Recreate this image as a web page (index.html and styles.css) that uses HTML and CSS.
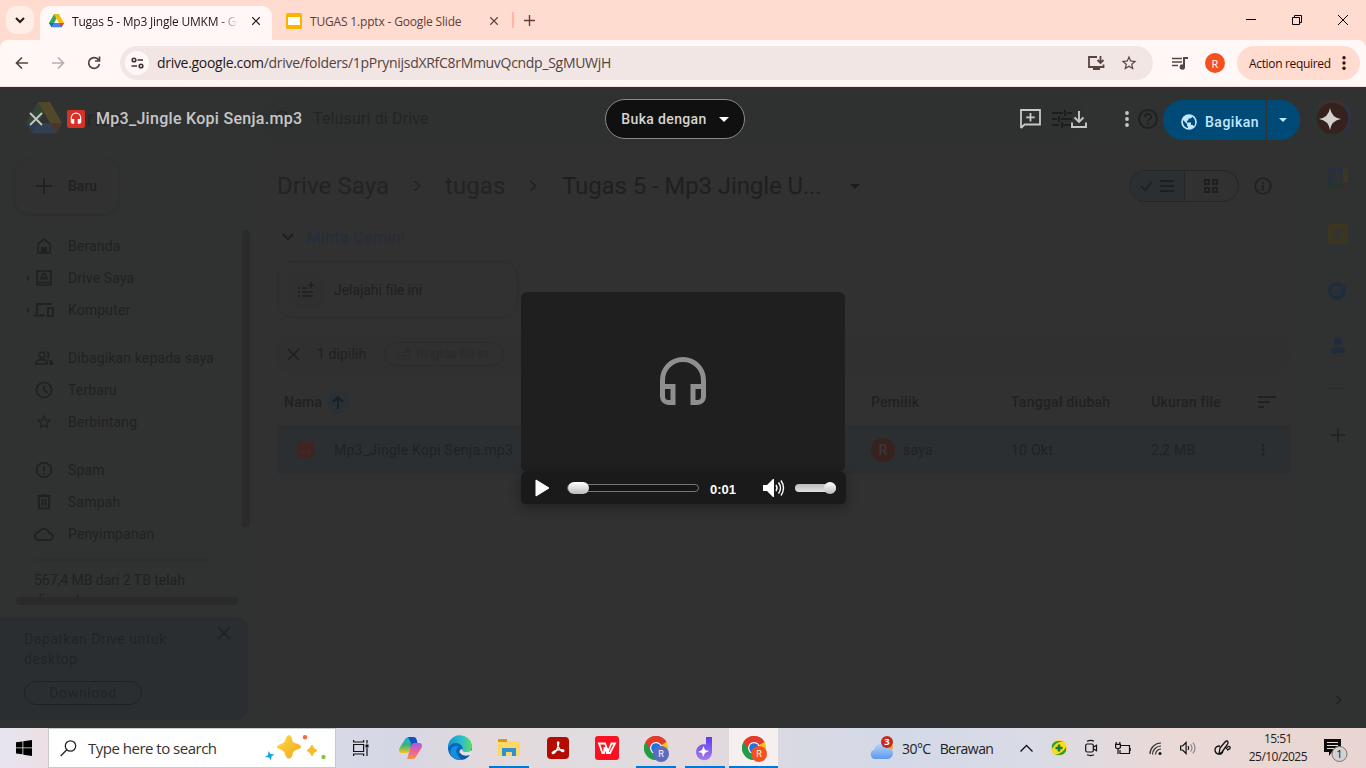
FILE: index.html
```html
<!DOCTYPE html>
<html lang="id">
<head>
<meta charset="utf-8">
<title>Tugas 5 - Mp3 Jingle UMKM - Google Drive</title>
<link rel="stylesheet" href="styles.css">
</head>
<body>
<svg class="defs" aria-hidden="true">
  <symbol id="drive" viewBox="0 0 24 22"><path d="M8 0h8l-4 7z" fill="#188038"/><path d="M8 0l4 7-7.5 14L0 14z" fill="#34a853"/><path d="M8 0h8l8 14h-8z" fill="#fbbc04"/><path d="M8 14h16l-4 7H4z" fill="#4285f4"/><path d="M16 14h8l-4 7z" fill="#ea4335"/><path d="M0 14h8l-4 7z" fill="#1967d2"/></symbol>
  <symbol id="headset" viewBox="0 0 24 24"><path d="M12 1a9 9 0 0 0-9 9v7a3 3 0 0 0 3 3h3v-8H5v-2a7 7 0 0 1 14 0v2h-4v8h3a3 3 0 0 0 3-3v-7a9 9 0 0 0-9-9z"/></symbol>
  <symbol id="x" viewBox="0 0 16 16"><path d="M2 2l12 12M14 2L2 14" fill="none" stroke="currentColor" stroke-width="1.8"/></symbol>
  <symbol id="plus" viewBox="0 0 16 16"><path d="M8 0v16M0 8h16" fill="none" stroke="currentColor" stroke-width="2"/></symbol>
  <symbol id="chev" viewBox="0 0 8 12"><path d="M1.5 1l5 5-5 5" fill="none" stroke="currentColor" stroke-width="1.7"/></symbol>
  <symbol id="star" viewBox="0 0 24 24"><path d="M22 9.24l-7.19-.62L12 2 9.19 8.63 2 9.24l5.46 4.73L5.82 21 12 17.27 18.18 21l-1.63-7.03L22 9.24zM12 15.4l-3.76 2.27 1-4.28-3.32-2.88 4.38-.38L12 6.1l1.71 4.04 4.38.38-3.32 2.88 1 4.28L12 15.4z"/></symbol>
  <symbol id="dots" viewBox="0 0 4 16"><circle cx="2" cy="2" r="1.9"/><circle cx="2" cy="8" r="1.9"/><circle cx="2" cy="14" r="1.9"/></symbol>
  <symbol id="chrome" viewBox="0 0 24 24"><circle cx="12" cy="12" r="12" fill="#fbc116"/><path d="M12 12L1.6 6A12 12 0 0 1 22.4 6z" fill="#e33b2e"/><path d="M1.6 6A12 12 0 0 0 12 24l5.2-9L12 12z" fill="#1e9e4a"/><path d="M12 6h10.4A12 12 0 0 0 1.6 6l5.2 9z" fill="#e33b2e"/><circle cx="12" cy="12" r="6" fill="#fff"/><circle cx="12" cy="12" r="4.8" fill="#1a73e8"/></symbol>
  <symbol id="listspark" viewBox="0 0 18 18"><path d="M1 7h2M5 7h5M1 11h2M5 11h11M1 15h2M5 15h11" stroke="currentColor" stroke-width="1.6" fill="none"/><path d="M14 0l1 3 3 1-3 1-1 3-1-3-3-1 3-1z" fill="currentColor"/></symbol>
</svg>

<div class="tabstrip">
  <button class="tabsearch"><svg width="10" height="7" viewBox="0 0 10 7"><path d="M1 1l4 4 4-4" fill="none" stroke="#2b1914" stroke-width="2"/></svg></button>
  <div class="tab active">
    <svg width="15" height="14"><use href="#drive"/></svg>
    <span class="tabtitle fade">Tugas 5 - Mp3 Jingle UMKM - Google Drive</span>
    <svg class="tabx" width="10" height="10"><use href="#x"/></svg>
  </div>
  <div class="tab second">
    <svg width="16" height="16" viewBox="0 0 16 16"><rect width="16" height="16" rx="1.5" fill="#fab400"/><rect x="2" y="4" width="12" height="8" fill="#fff"/></svg>
    <span class="tabtitle">TUGAS 1.pptx - Google Slide</span>
    <svg class="tabx" width="10" height="10"><use href="#x"/></svg>
  </div>
  <i class="tabsep"></i>
  <svg class="newtab" width="11" height="11"><use href="#plus"/></svg>
  <div class="winctl">
    <svg width="10" height="10" viewBox="0 0 10 10"><path d="M0 4.5h10" stroke="#000"/></svg>
    <svg width="10" height="10" viewBox="0 0 10 10" fill="none" stroke="#000"><path d="M.5 2.5h7v7h-7zM2.5 2V.5h7v7H8"/></svg>
    <svg width="10" height="10" viewBox="0 0 10 10"><path d="M0 0l10 10M10 0L0 10" stroke="#000"/></svg>
  </div>
</div>

<div class="toolbar">
  <svg class="nav-i" width="14" height="14" viewBox="0 0 14 14"><path d="M13 7H2M7 1.500L1.500 7 7 12.500"/></svg>
  <svg class="nav-i off" width="14" height="14" viewBox="0 0 14 14"><path d="M1 7h11M7 1.500L12.500 7 7 12.500"/></svg>
  <svg class="nav-i" width="14" height="14" viewBox="0 0 14 14"><path d="M11.600 4A5.400 5.400 0 1 0 12.400 8M12.500 .5v4.500H8"/></svg>
  <div class="omnibox">
    <span class="site"><svg width="13" height="12" viewBox="0 0 13 12" fill="none" stroke="#43302b" stroke-width="1.600"><circle cx="3" cy="3" r="1.800"/><path d="M6.500 3H12M0.500 9H6"/><circle cx="10" cy="9" r="1.800"/></svg></span>
    <span class="url"><b>drive.google.com</b>/drive/folders/1pPrynijsdXRfC8rMmuvQcndp_SgMUWjH</span>
    <svg class="inst" width="17" height="14" viewBox="0 0 17 14"><path d="M9 1H1v10h14.500V8.500" fill="none" stroke="#57443f" stroke-width="1.800"/><path d="M5 11h7v3H5z" fill="#57443f"/><path d="M12.500 0v6.500M9.500 4l3 3 3-3" fill="none" stroke="#57443f" stroke-width="1.800"/></svg>
    <svg width="18" height="18" fill="#57443f"><use href="#star"/></svg>
  </div>
  <svg class="media" width="16" height="13" viewBox="0 0 16 13"><path d="M0 1.500h10M0 5h10M0 8.500h6" stroke="#57443f" stroke-width="1.700"/><path d="M11 0h5v2h-3v8a2.700 2.700 0 1 1-2-2.600z" fill="#57443f"/></svg>
  <span class="me">R</span>
  <div class="action">Action required<svg width="4" height="14"><use href="#dots"/></svg></div>
</div>

<main class="stage">
  <section class="drive">
    <header class="dhead">
      <svg class="dlogo" width="36" height="33"><use href="#drive"/></svg>
      <span class="dname">Drive</span>
      <div class="dsearch"><svg width="18" height="18" viewBox="0 0 18 18"><circle cx="7" cy="7" r="5.500" fill="none" stroke="#252727" stroke-width="2"/><path d="M11 11l6 6" stroke="#252727" stroke-width="2"/></svg><span>Telusuri di Drive</span>
      <svg class="tune" width="20" height="18" viewBox="0 0 20 18"><path d="M0 3h11M15 3h5M13 0v6M0 9h5M9 9h11M7 6v6M0 15h7M11 15h9M10 12v6" stroke="#1c1e1e" stroke-width="2"/></svg></div>
      <svg class="help" width="20" height="20" viewBox="0 0 20 20"><circle cx="10" cy="10" r="9" fill="none" stroke="#1f2121" stroke-width="2"/><path d="M7 8a3 3 0 1 1 4.500 2.500Q10 11.300 10 12.500M10 14v2" fill="none" stroke="#1f2121" stroke-width="1.800"/></svg>
      <span class="avatar-ring"><i></i></span>
    </header>
    <aside class="side">
      <button class="new"><svg width="16" height="16"><use href="#plus"/></svg>Baru</button>
      <div class="scroller">
        <nav>
          <a><svg width="14" height="16" viewBox="0 0 14 16"><path d="M1 15V6l6-4.800L13 6v9z" fill="none" stroke="currentColor" stroke-width="1.700"/><path d="M4 15V9h6v6z"/></svg>Beranda</a>
          <a class="tri"><svg width="16" height="16" viewBox="0 0 16 16"><path d="M1 1h14v14H1zM1 12.500h14" fill="none" stroke="currentColor" stroke-width="1.600"/><path d="M7 4h2l2 4.500H5z" fill="none" stroke="currentColor" stroke-width="1.800"/></svg>Drive Saya</a>
          <a class="tri"><svg width="20" height="14" viewBox="0 0 20 14"><path d="M18 1H3v10M0 12.500h11M14 5h5v8h-5z" fill="none" stroke="currentColor" stroke-width="1.800"/></svg>Komputer</a>
          <a class="gap"><svg width="18" height="14" viewBox="0 0 18 14"><circle cx="7" cy="4" r="2.800" fill="none" stroke="currentColor" stroke-width="1.700"/><path d="M1 13v-1.500C1 9 5 8.700 7 8.700s5 .5 5 2.800V13z" fill="none" stroke="currentColor" stroke-width="1.700"/><path d="M11 .300a3.700 3.700 0 0 1 0 7.400 5 5 0 0 0 0-7.400M13 8.500c2.500.3 5 1.200 5 3V14h-3.500v-2.500c0-1.200-.6-2.200-1.500-3"/></svg>Dibagikan kepada saya</a>
          <a><svg width="18" height="18" viewBox="0 0 18 18" fill="none" stroke="currentColor" stroke-width="1.700"><circle cx="9" cy="9" r="7.500"/><path d="M9 4.500V9l3.500 3"/></svg>Terbaru</a>
          <a><svg width="18" height="18"><use href="#star"/></svg>Berbintang</a>
          <a class="gap"><svg width="16" height="16" viewBox="0 0 16 16" fill="none" stroke="currentColor" stroke-width="1.700"><path d="M5 1h6l4 4v6l-4 4H5l-4-4V5zM8 4v5M8 10.500v2"/></svg>Spam</a>
          <a><svg width="14" height="16" viewBox="0 0 14 16" fill="none" stroke="currentColor" stroke-width="1.800"><path d="M2 2v12.500h10V2M0 2h14M4.500 1h5M5.500 5v7M8.500 5v7"/></svg>Sampah</a>
          <a><svg width="20" height="14" viewBox="0 0 20 14" fill="none" stroke="currentColor" stroke-width="1.800"><path d="M5 13a4 4 0 0 1-.3-8A5.500 5.500 0 0 1 15 6a3.500 3.500 0 0 1 .5 7z"/></svg>Penyimpanan</a>
          <i class="quota"></i>
          <p>567,4 MB dari 2 TB telah digunakan</p>
        </nav>
        <i class="vbar"></i>
      </div>
      <i class="hbar"></i>
      <div class="promo">
        <div><p>Dapatkan Drive untuk desktop</p><svg width="16" height="16"><use href="#x"/></svg></div>
        <button>Download</button>
      </div>
    </aside>
    <section class="panel">
      <div class="crumbs">
        <span class="c1">Drive Saya</span><svg width="8" height="12"><use href="#chev"/></svg>
        <span class="c2">tugas</span><svg width="8" height="12"><use href="#chev"/></svg>
        <span class="c3">Tugas 5 - Mp3 Jingle U...</span><i class="caret"></i>
        <div class="views"><span><svg width="13" height="10" viewBox="0 0 13 10"><path d="M1 5l4 4 7-8" fill="none" stroke="currentColor" stroke-width="1.700"/></svg><svg width="14" height="12" viewBox="0 0 14 12"><path d="M0 1h14M0 6h14M0 11h14" stroke="currentColor" stroke-width="2"/></svg></span><span><svg width="14" height="14" viewBox="0 0 14 14" fill="none" stroke="currentColor" stroke-width="2"><path d="M1 1h4v4H1zM9 1h4v4H9zM1 9h4v4H1zM9 9h4v4H9z"/></svg></span></div>
        <svg class="info" width="18" height="18" viewBox="0 0 18 18" fill="none" stroke="#202020" stroke-width="1.600"><circle cx="9" cy="9" r="7.700"/><path d="M9 5v1.700M9 8v5.500"/></svg>
      </div>
      <div class="gemini"><svg width="12" height="8" viewBox="0 0 12 8"><path d="M1 1l5 5 5-5" fill="none" stroke="#1d1d1d" stroke-width="1.800"/></svg><span>Minta Gemini</span></div>
      <div class="explore"><span><svg width="18" height="18"><use href="#listspark"/></svg></span>Jelajahi file ini</div>
      <div class="selbar"><svg width="15" height="15"><use href="#x"/></svg><span>1 dipilih</span><div><svg width="14" height="14"><use href="#listspark"/></svg>Ringkas file ini</div></div>
      <div class="row head"><span class="nm">Nama<i><svg width="12" height="14" viewBox="0 0 12 14"><path d="M6 14V2M1 7l5-5 5 5" fill="none" stroke="#1c1f21" stroke-width="1.800"/></svg></i></span><span>Pemilik</span><span>Tanggal diubah</span><span>Ukuran file</span><svg width="18" height="12" viewBox="0 0 18 12"><path d="M0 1h18M0 6h12M0 11h6" stroke="#202020" stroke-width="2"/></svg></div>
      <div class="row file"><span class="nm"><b class="mp3 dim"><svg width="12" height="14"><use href="#headset"/></svg></b>Mp3_Jingle Kopi Senja.mp3</span><span><em>R</em>saya</span><span>10 Okt</span><span>2,2 MB</span><svg width="4" height="12"><use href="#dots"/></svg></div>
    </section>
    <aside class="rail">
      <svg width="20" height="20" viewBox="0 0 20 20"><path d="M0 0h15v5H5v10H0z" fill="#27303c"/><path d="M15 0h5v15h-5z" fill="#3a3628"/><path d="M0 15h20l-5 5H0z" fill="#27332b"/><path d="M15 15h5l-5 5z" fill="#3c2b2b"/><path d="M5 5h10v10H5z" fill="#303232"/><text x="10" y="13" text-anchor="middle" font-size="8" fill="#27303c">31</text></svg>
      <svg width="20" height="20" viewBox="0 0 20 20"><rect width="20" height="20" rx="2" fill="#3b3521"/><circle cx="10" cy="9" r="4" fill="#333331"/><path d="M8 14h4v2H8z" fill="#333331"/></svg>
      <svg width="20" height="20" viewBox="0 0 20 20"><circle cx="9" cy="11" r="7" fill="none" stroke="#1f2c3b" stroke-width="3.500"/><path d="M6 10l4 4 8-10" fill="none" stroke="#22303f" stroke-width="3"/></svg>
      <svg width="20" height="20" viewBox="0 0 20 20"><circle cx="10" cy="5.500" r="4" fill="#1f2c3b"/><path d="M3 17v-3c0-4 14-4 14 0v3z" fill="#1f2c3b"/></svg>
      <i></i>
      <svg class="rp" width="14" height="14"><use href="#plus"/></svg>
      <svg class="rc" width="7" height="10"><use href="#chev"/></svg>
    </aside>
  </section>

  <section class="viewer">
    <div class="vbarTop">
      <svg class="close" width="16" height="16"><use href="#x"/></svg>
      <b class="mp3"><svg width="14" height="16"><use href="#headset"/></svg></b>
      <h1>Mp3_Jingle Kopi Senja.mp3</h1>
      <button class="open">Buka dengan<i class="caret"></i></button>
      <svg class="comment" width="21" height="21" viewBox="0 0 21 21" fill="none" stroke="#c7c7c7" stroke-width="1.800"><path d="M1 19V1h19v14.500H4.500L1 19M10.500 4v8.500M6.200 8.300h8.600"/></svg>
      <svg class="down" width="16" height="17" viewBox="0 0 16 17" fill="none" stroke="#c7c7c7" stroke-width="1.900"><path d="M8 0v11M3.500 6.500L8 11l4.500-4.500M1 11.500V16h14v-4.500"/></svg>
      <svg class="more" width="4" height="16"><use href="#dots"/></svg>
      <div class="share"><span><svg width="16" height="16" viewBox="0 0 16 16"><circle cx="8" cy="8" r="7.800" fill="#c2e7ff"/><path d="M2 6l4 4v1.500L7 13v1C4 13.500 1.500 11 2 6zM11 2.500c0 1-1 2-2 2H7.500V6L6 7v1.500h4V11h2l1 1.500c2-3 1.500-8-2-10z" fill="#004a77"/></svg>Bagikan</span><span><i class="caret"></i></span></div>
      <svg class="spark" width="22" height="22" viewBox="0 0 22 22"><path d="M11 0Q12.500 9.500 22 11 12.500 12.500 11 22 9.500 12.500 0 11 9.500 9.500 11 0z" fill="#d2d0cf"/></svg>
    </div>
    <div class="player">
      <div class="art"><svg width="46" height="48" viewBox="0 0 46 48" fill="none" stroke="#8f8f8f" stroke-width="5"><path d="M2.500 30V23a20.500 20.500 0 0 1 41 0v7M2.500 29.500h10.500v16H8.500a6 6 0 0 1-6-6zM43.500 29.500H33v16h4.500a6 6 0 0 0 6-6z"/></svg></div>
      <div class="controls">
        <svg width="15" height="18" viewBox="0 0 15 18"><path d="M1 1l13 8-13 8z" fill="#fff" stroke="#fff" stroke-linejoin="round"/></svg>
        <div class="seek"><i></i></div>
        <time>0:01</time>
        <svg class="vol" width="22" height="18" viewBox="0 0 22 18"><path d="M0 6h4l6-6h1v18h-1l-6-6H0z" fill="#fff"/><path d="M13 6q2 3 0 6M15.500 3.500q4 5.500 0 11M18 1.500q5 7.500 0 15" fill="none" stroke="#fff" stroke-width="1.400"/></svg>
        <div class="level"><i></i></div>
      </div>
    </div>
  </section>
</main>

<footer class="taskbar">
  <span class="start"><svg width="16" height="16" viewBox="0 0 16 16"><path d="M0 2.300l6.500-.9v6H0zM7.300 1.300L16 0v7.400H7.300zM0 8.300h6.500v6L0 13.600zM7.300 8.300H16V16l-8.700-1.300z"/></svg></span>
  <div class="find">
    <svg width="17" height="17" viewBox="0 0 17 17" fill="none" stroke="#222" stroke-width="1.300"><circle cx="10.500" cy="6" r="5.200"/><path d="M6.800 9.800L.7 16"/></svg><span>Type here to search</span>
    <svg class="sparks" width="61" height="26" viewBox="0 0 61 26"><defs><linearGradient id="gold" x2="1" y2="1"><stop stop-color="#ffdb4d"/><stop offset="1" stop-color="#f0a612"/></linearGradient></defs><path d="M24 0Q26.500 0 27.500 6 28.500 8 33 9 36 10.500 36 12t-4 2.500q-3 1-4 3-1 6-4 6t-4.500-6q-1-2-4-3-3.500-1-3.500-2.500T16 9q3-1 4-3 1.500-6 4-6z" fill="url(#gold)"/><path d="M47 10q1 4 5 5.500-4 1.500-5 5.500-1.500-4-5-5.500 3.500-1.500 5-5.500z" fill="#f5bd28" stroke="#f5bd28"/><path d="M3.500 16l2 3 4 .5-3 2-.5 4-2-3-4-.5 3-2z" fill="#16a5e8"/><circle cx="40" cy="2.300" r="2.200" fill="#f26b3a"/><circle cx="58.500" cy="22" r="2.200" fill="#86ca3c"/></svg>
  </div>
  <span class="tview"><svg width="16" height="16" viewBox="0 0 16 16" fill="none" stroke="#111" stroke-width="1.200"><path d="M.6 4.500h10v7H.6zM.6 0v2h10V0M.6 16v-2h10v2M14 0v3.500M14 8v8"/><path d="M12.500 4.500h3v3h-3z" fill="#111" stroke="none"/></svg></span>
  <div class="apps">
    <span><svg width="23" height="22" viewBox="0 0 23 22"><defs><linearGradient id="cpa" x2="0" y2="1"><stop stop-color="#18b5ee"/><stop offset=".5" stop-color="#36b37e"/><stop offset="1" stop-color="#f5c51b"/></linearGradient><linearGradient id="cpb" x2="0" y2="1"><stop stop-color="#a45ae8"/><stop offset=".55" stop-color="#f06391"/><stop offset="1" stop-color="#f7944a"/></linearGradient></defs><path d="M6.500 1.500Q7.500 0 9.500 0H15l-4 13q-1 3-4 3H3q-4 0-2.500-5z" fill="url(#cpa)"/><path d="M16.500 20.500q-1 1.500-3 1.500H8l4-13q1-3 4-3h4q4 0 2.500 5z" fill="url(#cpb)"/><path d="M9 0h5.500Q17 0 17.800 3l.7 3H16q-3 0-4 3l-.5 1.500L12 6z" fill="#1451c4"/></svg></span>
    <span><svg width="24" height="24" viewBox="0 0 24 24"><defs><linearGradient id="edg" x2="1"><stop stop-color="#1794d8"/><stop offset=".6" stop-color="#2dc0c8"/><stop offset="1" stop-color="#62df54"/></linearGradient></defs><circle cx="12" cy="12" r="12" fill="#0b64b8"/><path d="M0 12A12 12 0 0 1 24 10.500q0 5.500-6 5.500-4 0-3.500-2.500 1-1.500-1-4Q9 5.500 4 8 1 9.500 0 12z" fill="url(#edg)"/><path d="M11 10q-5 4-1 10 2 3 6 3-10 3-14-6Q3 8 11 10z" fill="#1590dc"/><path d="M14.500 13q-1 3 4 3 3 0 5-2l1 4-2.500 2q-9 2-10.500-4 0-3 3-3z" fill="#e0dfe4"/><path d="M12 17q3 4 10 2-4 5-9 4-3-2-1-6z" fill="#0c58a6"/></svg></span>
    <span class="on"><svg width="22" height="20" viewBox="0 0 22 20"><path d="M0 1h8l2 2h11q1 0 1 1v14H0z" fill="#fed766"/><path d="M0 1h9v3H0z" fill="#dd9a0d"/><path d="M4 18v-8h14v8h-4v-4H8v4z" fill="#2e91d2"/></svg></span>
    <span><svg width="22" height="22" viewBox="0 0 22 22"><rect width="22" height="22" rx="4" fill="#b30b00"/><path d="M5.500 16.500c-1.500-1 4-4 7.500-4s4.500 1 3.500 1.800c-1.500 1-6-3-6-8 0-2 1.500-1.500 1.300 0-.3 3.500-3.300 10.700-6.300 10.200z" fill="none" stroke="#fff" stroke-width="1.400"/></svg></span>
    <span><svg width="24" height="24" viewBox="0 0 24 24"><rect width="24" height="24" rx="3" fill="#fb1121"/><path d="M4 7.500h6l3 8 3.500-8H20l-5 9.500h-3L9.500 11 9 17H7.500z" fill="none" stroke="#fff" stroke-width="1.800"/></svg></span>
    <span class="on badge"><svg width="24" height="24"><use href="#chrome"/></svg><i class="blue">R</i></span>
    <span class="on"><svg width="17" height="23" viewBox="0 0 17 23"><defs><linearGradient id="dd" x2="0" y2="1"><stop stop-color="#5b3ef5"/><stop offset="1" stop-color="#a87be8"/></linearGradient></defs><path d="M10 0h6v15a8 8 0 1 1-6-7.500z" fill="url(#dd)"/><path d="M7.500 9l1.500 4 4 1-4 2-2 4-1-4-4-1 4-2z" fill="#fff"/></svg></span>
    <span class="on active badge"><svg width="24" height="24"><use href="#chrome"/></svg><i class="orange">R</i></span>
  </div>
  <div class="weather"><svg width="24" height="24" viewBox="0 0 24 24"><defs><linearGradient id="cl" x2="0" y2="1"><stop stop-color="#b3d3fb"/><stop offset="1" stop-color="#5f98ec"/></linearGradient></defs><circle cx="19" cy="11" r="5" fill="#f4a62a"/><path d="M5 23a5 5 0 0 1 .5-9.500A6.500 6.500 0 0 1 18 12a5.500 5.500 0 0 1 1 11z" fill="url(#cl)"/><circle cx="18" cy="6" r="6" fill="#c42b1c"/><text x="18" y="9.300" text-anchor="middle" font-size="9.500" font-weight="700" fill="#fff">3</text></svg><span>30°C</span><span>Berawan</span></div>
  <div class="tray">
    <svg width="13" height="7" viewBox="0 0 13 7"><path d="M.5 6.500l6-6 6 6" fill="none" stroke="#111" stroke-width="1.300"/></svg>
    <svg width="16" height="16" viewBox="0 0 16 16"><circle cx="8" cy="8" r="8" fill="#f9dc20"/><path d="M1 5Q4-1 13 2 7 1 3 6L1 9zM15 11q-3 6-12 3 6 1 10-4l2-3z" fill="#239b45"/><path d="M8 4.500v7M4.500 8h7" stroke="#187a35" stroke-width="2.500"/></svg>
    <svg width="12" height="16" viewBox="0 0 12 16" fill="none" stroke="#111" stroke-width="1.200"><path d="M2 1.200q4-1.500 7 0M2 14.800q4 1.500 7 0"/><rect x=".7" y="4" width="7.600" height="8" rx="1.500"/><path d="M8.500 7l3-1.800v5.600l-3-1.800"/></svg>
    <svg width="16" height="13" viewBox="0 0 16 13" fill="none" stroke="#111" stroke-width="1.200"><path d="M6 3.500h8.500v8H5V8M15.200 6v3M1.200 0v2M4.800 0v2M.6 2.300h4.800V5q0 1.500-2.400 1.500T.6 5zM3 6.500V12"/></svg>
    <svg width="13" height="13" viewBox="0 0 13 13" fill="none" stroke="#333" stroke-width="1.200"><path d="M1 12A11 11 0 0 1 12 1M3.500 12.500A8.500 8.500 0 0 1 12 4M6.500 12.500A6 6 0 0 1 12 7"/><circle cx="11" cy="11.500" r="1.500" fill="#111" stroke="none"/></svg>
    <svg width="17" height="14" viewBox="0 0 17 14" fill="none" stroke="#111" stroke-width="1.200"><path d="M.6 5v4h2l3.500 3.500v-11L2.600 5z"/><path d="M8 5q1.500 2 0 4"/><path d="M10.500 3.500q3 3.500 0 7M13 1.500q4 5.500 0 11" stroke="#888"/></svg>
    <svg width="17" height="16" viewBox="0 0 17 16" fill="none" stroke="#111" stroke-width="1.300"><path d="M6 8l5-6q2-2 3 0 .5 1-1 3L8 12l-3 2zM6 6Q1 6 1 10q0 3 3 4 4 1 5-3M12 9q3-4 4-2t-3 3"/></svg>
  </div>
  <div class="clock"><span>15:51</span><span>25/10/2025</span></div>
  <div class="notif"><svg width="26" height="26" viewBox="0 0 26 26"><path d="M0 2h17v13H8l-3 4v-4H0z" fill="#0c0c0c"/><path d="M3 5.500h11M3 8.500h11M3 11.500h7" stroke="#eadbd9" stroke-width="1.200"/><circle cx="15.500" cy="17" r="7.500" fill="#d6d0d0" stroke="#777"/><text x="15.500" y="21" text-anchor="middle" font-size="11" fill="#111">1</text></svg></div>
</footer>
</body>
</html>
```

FILE: styles.css
```css
*{box-sizing:border-box}
body{margin:0;width:1366px;height:768px;overflow:hidden;display:grid;grid-template-rows:40px 47px 641px 40px;font-family:"Open Sans","Noto Sans",sans-serif;background:#ffdbd0}
button{font:inherit;color:inherit;border:0;background:none;padding:0;margin:0}
svg{display:block;flex:none;overflow:visible}
.defs{position:absolute;width:0;height:0}
i{font-style:normal}
h1,p{margin:0}

/* tab strip */
.tabstrip{display:flex;align-items:center;padding-left:6px;background:#ffdbd0;color:#5d4039}
.tabsearch{width:28px;height:28px;border-radius:10px;background:#ffede8;display:grid;place-items:center;margin-right:6px}
.tab{display:flex;align-items:center;height:34px;margin-top:6px;font-size:12px;letter-spacing:-.17px}
.tab.active{width:232px;background:#fff8f6;border-radius:10px 10px 0 0;padding:0 11px 4px 9px;color:#231917;letter-spacing:-.22px}
.tab.second{width:241px;padding:0 14px 4px 14px}
.tabtitle{margin-left:8px;flex:1;white-space:nowrap;overflow:hidden}
.tabx{color:#231917;margin-left:13px}
.second .tabx{color:#5d4039}
.fade{-webkit-mask-image:linear-gradient(90deg,#000 146px,transparent 166px);mask-image:linear-gradient(90deg,#000 146px,transparent 166px)}
.tabsep{width:2px;height:16px;background:#ffb59f;margin-left:-1px}
.newtab{margin-left:10px;color:#5d4039}
.winctl{margin-left:auto;display:flex;gap:36px;padding-right:18px}

/* toolbar */
.toolbar{display:flex;align-items:center;height:47px;background:#fff8f6;border-radius:8px 8px 0 0;border-bottom:1px solid #f3dfd9;padding:0 6px 0 15px}
.nav-i{margin-right:22px;fill:none;stroke:#57443f;stroke-width:1.7}
.nav-i.off{stroke:#b9aca8}
.omnibox{display:flex;align-items:center;width:1033px;height:34px;border-radius:17px;background:#f2e6e4;padding:0 15px 0 5px;margin-left:-3px}
.site{width:24px;height:24px;border-radius:50%;background:#fff8f6;display:grid;place-items:center;margin-right:8px}
.url{font-size:14px;letter-spacing:-.3px;color:#53433f;flex:1;white-space:nowrap;margin-top:-1px}
.url b{font-weight:400;color:#231917}
.inst{margin-right:15px}
.media{margin-left:19px}
.me{width:20px;height:20px;border-radius:50%;background:#f4511e;color:#fff;font-size:11px;display:grid;place-items:center;margin:0 12px 0 17px}
.action{width:123px;height:34px;border-radius:17px;background:#ffdbd0;display:flex;align-items:center;justify-content:space-between;padding:0 14px 0 12px;font-size:12px;letter-spacing:-.33px;color:#3a0b01;white-space:nowrap}
.action svg{fill:#3a0b01}

/* dimmed drive page */
.stage{position:relative;overflow:hidden;background:#303231;font-family:Roboto,sans-serif}
.drive{display:grid;grid-template:63px 578px/256px 1046px 64px;height:641px;font-size:14px;color:#202121;fill:#202121;letter-spacing:.2px}
.dhead{grid-column:1/-1;display:flex;align-items:center;padding-left:26px}
.dlogo{opacity:.16}
.dname{font-size:22px;margin-left:10px;width:190px;color:#252727}
.dsearch{width:823px;height:48px;border-radius:24px;background:#2f3130;display:flex;align-items:center;font-size:16px;padding:0 13px;letter-spacing:.15px;color:#222423}
.dsearch span{margin-left:20px;flex:1}
.help{margin-left:53px}
.avatar-ring{margin-left:155px;width:38px;height:38px;border-radius:50%;border:2px solid #29382e;border-top-color:#4a2d2b;border-right-color:#2a3450;display:grid;place-items:center}
.avatar-ring i{width:31px;height:31px;border-radius:50%;background:#35221e}
.side{display:flex;flex-direction:column;align-items:flex-start}
.new{width:104px;height:56px;margin:8px 0 16px 15px;border-radius:16px;background:#313131;box-shadow:0 1px 3px #2a2b2b;display:flex;align-items:center;gap:16px;padding-left:21px;font-weight:500}
.scroller{display:flex;height:367px;width:256px}
nav{width:242px;overflow:hidden;font-size:14px}
nav a{height:32px;display:grid;grid-template-columns:20px 1fr;gap:14px;align-items:center;padding-left:34px;letter-spacing:.15px;white-space:nowrap;justify-items:start}
nav a svg{justify-self:center}
nav a.gap{margin-top:16px}
nav a.tri{background:linear-gradient(#202121,#202121) no-repeat 28px 15px/1px 3px,linear-gradient(#202121,#202121) no-repeat 27px 14px/1px 5px}
.quota{display:block;width:175px;height:4px;margin:8px 0 8px 34px;background:#2e2f2f;border-radius:2px}
nav p{margin-left:34px;width:170px;line-height:20px;letter-spacing:-.03px}
.vbar{width:8px;height:297px;border-radius:4px;background:#2c2b2b}
.hbar{width:222px;height:8px;border-radius:4px;background:#2b2a2a;margin-left:16px}
.promo{width:248px;height:103px;margin-top:12px;background:#2b2e31;border-radius:0 12px 12px 0;padding:12px 16px 0 24px;color:#1f2427;letter-spacing:.5px}
.promo div{display:flex;justify-content:space-between;line-height:20px}
.promo p{width:170px}
.promo svg{margin-top:-4px}
.promo button{width:118px;height:24px;margin-top:12px;border:1px solid #1c2227;border-radius:12px;letter-spacing:.65px}
.panel{height:562px;background:#313131;border-radius:16px;padding:12px 12px 0 21px}
.crumbs{display:flex;align-items:center;height:48px;font-size:24px;letter-spacing:.1px;color:#232323;white-space:nowrap}
.c1{width:136px}
.c2{width:60px;margin-left:24px}
.crumbs .c2+svg{margin-left:24px}
.c3{margin-left:25px;width:262px;color:#1f1f1f;letter-spacing:-.1px}
.caret{width:0;height:0;border:5px solid transparent;border-top-color:currentColor;border-bottom:0}
.crumbs .caret{margin-left:26px;color:#1c1c1c}
.views{margin-left:auto;display:flex;width:110px;height:32px;border:1px solid #252626;border-radius:16px;overflow:hidden;color:#1e1f20}
.views span{flex:1;display:flex;align-items:center;justify-content:center;gap:7px}
.views span:first-child{background:#2b2f32;border-right:1px solid #252626}
.info{margin:0 18px 0 15px}
.gemini{display:flex;align-items:center;gap:13px;height:54px;padding-left:5px;font-size:16px;letter-spacing:.3px}
.gemini span{background:linear-gradient(90deg,#202e3d,#2a2b38);color:transparent;background-clip:text;-webkit-background-clip:text}
.explore{display:flex;align-items:center;width:241px;height:57px;margin-top:-3px;border:1px solid #2d2d2d;border-radius:16px;padding-left:10px;letter-spacing:-.05px;color:#1f1f1f}
.explore span{width:36px;height:36px;border-radius:10px;background:#303030;display:grid;place-items:center;margin-right:10px}
.selbar{display:flex;align-items:center;height:40px;margin:16px 0 8px -2px;padding-left:11px;border-radius:20px;background:#303030}
.selbar span{margin:0 18px 0 16px;letter-spacing:.1px}
.selbar div{width:120px;height:24px;border:1px solid #2b2b2b;border-radius:12px;display:flex;align-items:center;gap:5px;padding-left:12px;font-size:12px;color:#2a2a2a;letter-spacing:-.3px;white-space:nowrap}
.row{display:grid;grid-template-columns:594px 140px 140px 107px 1fr;align-items:center;white-space:nowrap}
.row span{display:flex;align-items:center;letter-spacing:.25px}
.row.head{margin-bottom:3px;font-weight:500;height:40px}
.head .nm{padding-left:7px}
.head i{width:22px;height:22px;border-radius:50%;background:#2a3034;display:grid;place-items:center;margin-left:5px}
.row.file{height:49px;background:#2b2f32;color:#1e2224}
.file>svg{margin-left:3px}
.mp3{background:#d93025;border-radius:2px;display:grid;place-items:center;width:18px;height:18px;fill:#fff;flex:none}
.mp3.dim{background:#44231e;width:16px;height:16px;margin:0 20px 0 21px;fill:#332f30}
.row em{width:24px;height:24px;border-radius:50%;background:#37221e;color:#3a3737;font-style:normal;font-weight:500;display:grid;place-items:center;margin-right:8px}
.rail{display:flex;flex-direction:column;align-items:center;padding:18px 0 0 8px;gap:36px}
.rail i{width:20px;height:1px;background:#2b2d2c;margin-top:-4px}
.rail .rp{margin-top:3px}
.rail .rc{margin-top:217px}

/* preview layer */
.viewer{position:absolute;inset:0;display:flex;flex-direction:column;align-items:center}
.vbarTop{width:1366px;height:64px;display:flex;align-items:center;padding-left:28px}
.close{color:#c7c7c7;margin-right:23px}
.vbarTop h1{font-size:16px;font-weight:500;color:#c7c7c7;margin-left:11px;letter-spacing:.29px;width:509px;white-space:nowrap;margin-top:-1px}
.open{width:140px;height:40px;border:1px solid #8a8a8a;border-radius:20px;background:#101010;color:#d5d5d5;font-size:14px;font-weight:500;display:flex;align-items:center;justify-content:center;gap:12px;letter-spacing:.35px}
.open .caret{color:#fff}
.comment{margin-left:275px}
.down{margin-left:30px}
.more{fill:#c7c7c7;margin-left:38px}
.share{display:flex;width:137px;height:40px;margin-left:34px;border-radius:20px;background:#004a77;color:#c2e7ff;font-size:14px;font-weight:500;margin-top:2px}
.share span{display:flex;align-items:center;gap:8px;padding:3px 0 0 18px;width:103px;letter-spacing:.5px}
.share span+span{border-left:1px solid #303231;padding:0 0 0 12px;width:34px}
.share .caret{border-width:4px 4px 0}
.spark{margin-left:19px}
.player{width:326px;margin:141px 0 0 2px}
.art{width:324px;height:180px;background:#1f1f1f;border-radius:6px;display:grid;place-items:center;padding-bottom:2px}
.controls{width:325px;height:32px;background:#1a1a1a;border-radius:5px;box-shadow:0 3px 12px rgba(0,0,0,.35);display:flex;align-items:center;padding-left:14px}
.seek{width:132px;height:8px;border:1px solid #777;border-radius:4px;background:#151515;margin-left:17px;display:flex;align-items:center}
.seek i{width:21px;height:12px;border-radius:6px;background:linear-gradient(#fff,#bbb);flex:none}
.controls time{font:bold 13px "Liberation Sans",sans-serif;color:#fff;margin-left:11px;width:53px;padding-top:2px}
.level{width:41px;height:8px;border-radius:4px;background:linear-gradient(#bbb,#e0e0e0);margin-left:10px;display:flex;justify-content:flex-end;align-items:center}
.level i{width:12px;height:12px;border-radius:50%;background:linear-gradient(#fff,#bbb)}

/* taskbar */
.taskbar{display:flex;align-items:center;background:linear-gradient(90deg,#e6e5f0,#ecdfe3 48px,#d8d9e6 336px,#d6d7e4 400px,#e4dadc 500px,#dfdce0 600px,#e5d9dc 690px,#d8dae3 800px,#d4d9e8 900px,#d9dbe6 1030px,#ead9d6 1170px,#e9d6d3);color:#222}
.start{width:48px;display:grid;place-items:center}
.find{width:288px;height:40px;background:#fff;border:1px solid #c7c9cc;display:flex;align-items:center;padding-left:11px;font-size:15px}
.find span{margin-left:11px;letter-spacing:-.5px;flex:1;color:#333;white-space:nowrap}
.sparks{margin-right:9px}
.tview{width:50px;display:grid;place-items:center}
.apps{display:flex;height:40px}
.apps span{width:49px;height:40px;display:grid;place-items:center;position:relative}
.apps .on{background:linear-gradient(#0078d7,#0078d7) no-repeat center bottom/40px 2px}
.apps .active{background:linear-gradient(#0078d7,#0078d7) no-repeat bottom/100% 2px #f5efef}
.badge i{position:absolute;left:22px;top:18px;width:16px;height:16px;border-radius:50%;color:#fff;font:9px/16px Roboto,sans-serif;text-align:center}
.blue{background:#5c6bc0}
.orange{background:#f4511e}
.weather{margin-left:91px;display:flex;align-items:center;font-size:14px;letter-spacing:-.55px;white-space:nowrap}
.weather span{margin-left:9px}
.weather svg{font-family:"Open Sans",sans-serif;letter-spacing:0}
.tray{display:flex;align-items:center;justify-content:space-between;width:211px;margin-left:27px}
.clock{display:flex;flex-direction:column;align-items:center;width:61px;margin-left:16px;font-size:12px;line-height:18px;letter-spacing:-.55px;white-space:nowrap}
.notif{margin:4px 0 0 16px}
```
